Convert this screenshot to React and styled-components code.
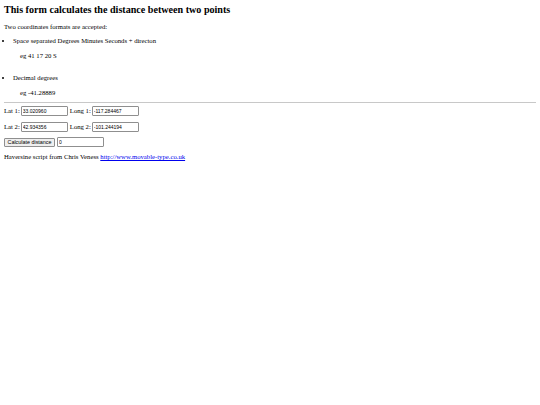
import React from "react";
import styled, { createGlobalStyle } from "styled-components";

const Global = createGlobalStyle`
  html, body { margin: 0; padding: 0; background: #fff; }
  body {
    padding: 4px;
    font-family: "Liberation Serif", "Times New Roman", serif;
    font-size: 6.7px;
    line-height: 8px;
    color: #000;
  }
`;

const Page = styled.div`
  display: flex;
  flex-direction: column;
`;

const Title = styled.h2`
  margin: 0;
  font-size: 10.1px;
  line-height: 12px;
  font-weight: bold;
`;

const Para = styled.p`
  margin: ${(p) => p.$mt || 0}px 0 0 ${(p) => p.$ml || 0}px;
`;

const List = styled.ul`
  margin: ${(p) => p.$mt || 0}px 0 0 0;
  padding: 0 0 0 9px;
  list-style: disc;
`;

const Item = styled.li``;

const Rule = styled.hr`
  margin: 5px 0 0 0;
  border: none;
  border-top: 1px solid #c8c8c8;
  height: 0;
`;

const Row = styled.div`
  display: flex;
  align-items: center;
  margin-top: ${(p) => p.$mt}px;
  height: 10px;
`;

const Label = styled.label`
  margin-right: 1px;
  margin-left: ${(p) => p.$ml || 0}px;
`;

const Field = styled.input`
  box-sizing: border-box;
  width: 47px;
  height: 10px;
  margin: 0;
  padding: 0 1px;
  border: 1px solid #8f8f8f;
  border-radius: 1px;
  font-family: "Liberation Sans", Arial, sans-serif;
  font-size: 5px;
  color: #000;
  background: #fff;
  outline: none;
`;

const Button = styled.button`
  box-sizing: border-box;
  height: 9px;
  margin: 0 2px 0 0;
  padding: 0 2.5px;
  border: 1px solid #8f8f8f;
  border-radius: 1px;
  background: #efefef;
  font-family: "Liberation Sans", Arial, sans-serif;
  font-size: 5.4px;
  line-height: 7px;
  color: #000;
`;

const Link = styled.a`
  color: #0000ee;
  text-decoration: underline;
`;

export default function App() {
  return (
    <>
      <Global />
      <Page>
        <Title>This form calculates the distance between two points</Title>
        <Para $mt={7}>Two coordinates formats are accepted:</Para>
        <List $mt={6}>
          <Item>
            Space separated Degrees Minutes Seconds + directon
            <Para $mt={7} $ml={7}>eg 41 17 20 S</Para>
          </Item>
        </List>
        <List $mt={14}>
          <Item>
            Decimal degrees
            <Para $mt={7} $ml={7}>eg -41.28889</Para>
          </Item>
        </List>
        <Rule />
        <Row $mt={3}>
          <Label>Lat 1:</Label>
          <Field defaultValue="33.020960" />
          <Label $ml={2}>Long 1:</Label>
          <Field defaultValue="-117.284467" />
        </Row>
        <Row $mt={6}>
          <Label>Lat 2:</Label>
          <Field defaultValue="42.934356" />
          <Label $ml={2}>Long 2:</Label>
          <Field defaultValue="-101.244194" />
        </Row>
        <Row $mt={5}>
          <Button>Calculate distance</Button>
          <Field defaultValue="0" />
        </Row>
        <Para $mt={6}>
          Haversine script from Chris Veness{" "}
          <Link href="#">http://www.movable-type.co.uk</Link>
        </Para>
      </Page>
    </>
  );
}
